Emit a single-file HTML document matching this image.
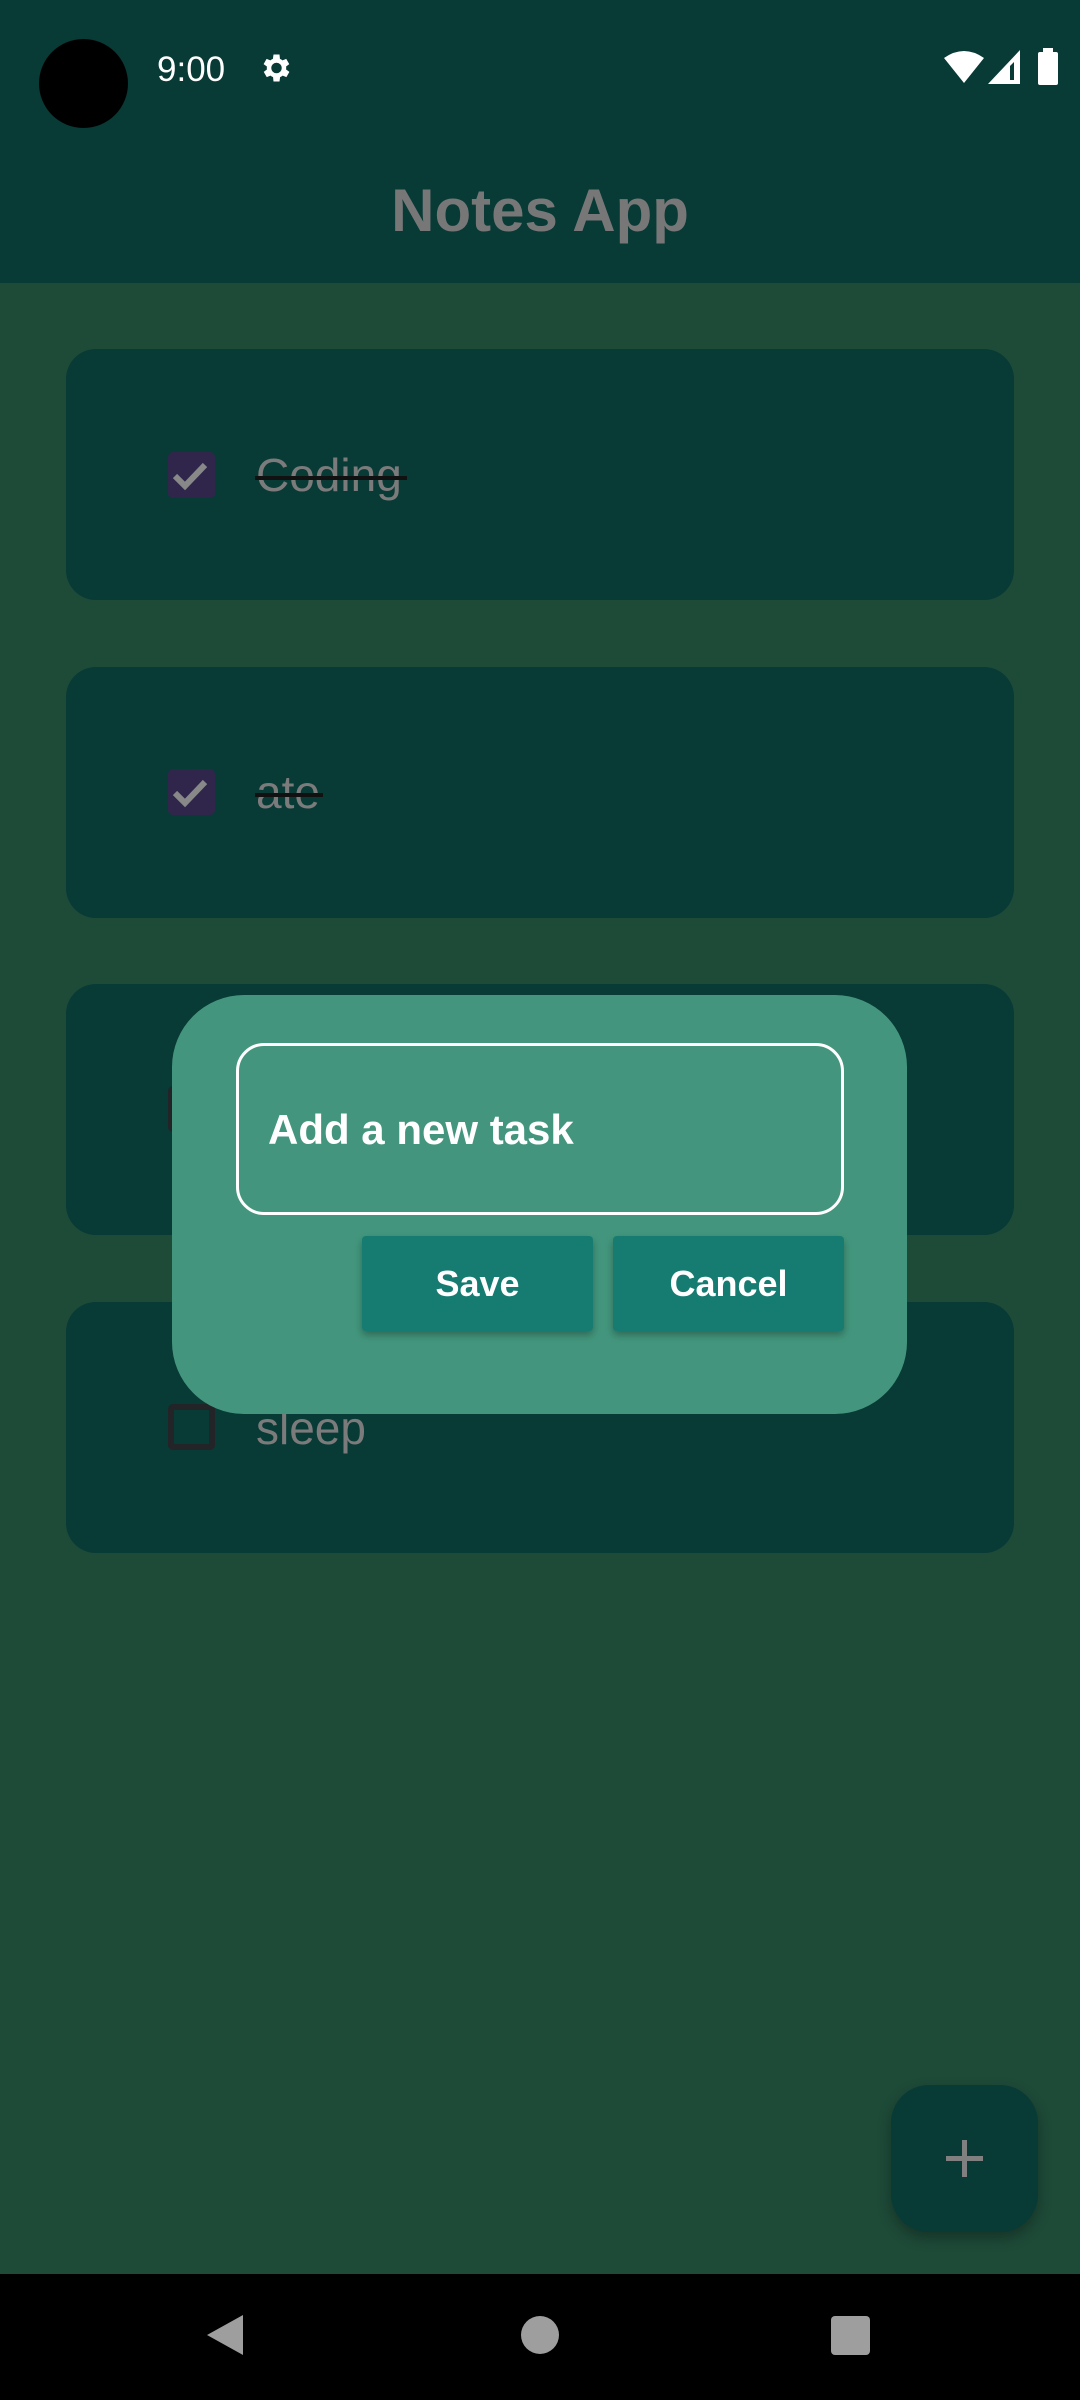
<!DOCTYPE html>
<html><head><meta charset="utf-8"><style>
*{margin:0;padding:0;box-sizing:border-box}
body{width:1080px;height:2400px;background:#1e4a38;position:relative;overflow:hidden;font-family:"Liberation Sans",sans-serif}
.abs{position:absolute}
.card{position:absolute;left:66px;width:948px;height:251px;background:#083a36;border-radius:30px}
.cb{position:absolute;left:168px;width:47px;height:46px;border-radius:5px}
.on{background:#30264c}
.off{border:6px solid #222428}
.txt{position:absolute;left:256px;font-size:46px;color:#7b7b7b;line-height:1}
.line{position:absolute;height:4px;background:#111}
.btn{position:absolute;top:1236px;height:95px;width:231px;background:#167c71;border-radius:4px;color:#fff;font-size:36px;font-weight:bold;text-align:center;line-height:95px;box-shadow:0 4px 8px rgba(0,0,0,.3)}
</style></head><body>
<div class="abs" style="left:0;top:0;width:1080px;height:283px;background:#083a36"></div>
<div class="abs" style="left:39px;top:39px;width:89px;height:89px;border-radius:50%;background:#000"></div>
<div class="abs" style="left:157px;top:50px;font-size:35px;color:#fff">9:00</div>
<svg class="abs" style="left:257px;top:50px" width="36" height="36" viewBox="0 0 24 24"><path fill="#fff" d="M19.4 13a7.5 7.5 0 0 0 0-2l2.1-1.6-2-3.5-2.5 1a7 7 0 0 0-1.7-1L15 3h-4l-.4 2.9a7 7 0 0 0-1.7 1l-2.5-1-2 3.5L6.6 11a7.5 7.5 0 0 0 0 2l-2.1 1.6 2 3.5 2.5-1a7 7 0 0 0 1.7 1L11 21h4l.4-2.9a7 7 0 0 0 1.7-1l2.5 1 2-3.5zM13 15.5a3.5 3.5 0 1 1 0-7 3.5 3.5 0 0 1 0 7z"/></svg>
<svg class="abs" style="left:944px;top:50px" width="40" height="34" viewBox="0 0 40 34"><path fill="#fff" d="M0 8Q20-6 40 8L20 33z"/></svg>
<svg class="abs" style="left:988px;top:50px" width="32" height="34" viewBox="0 0 32 34"><path fill="#fff" d="M32 0V34H0z"/><path fill="#083a36" d="M26 12V30H22V16z"/></svg>
<div class="abs" style="left:1038px;top:52px;width:20px;height:33px;background:#fff;border-radius:2px"></div>
<div class="abs" style="left:1043px;top:48px;width:10px;height:5px;background:#fff"></div>
<div class="abs" style="left:0;top:176px;width:1080px;text-align:center;font-size:60px;font-weight:bold;color:#777">Notes App</div>

<div class="card" style="top:349px"></div>
<div class="card" style="top:667px"></div>
<div class="card" style="top:984px"></div>
<div class="card" style="top:1302px"></div>

<div class="cb on" style="top:452px"><svg width="47" height="46" viewBox="0 0 47 46"><path d="M7 24l10 10 20-21" stroke="#888" stroke-width="6" fill="none"/></svg></div>
<div class="txt" style="top:452px">Coding</div>
<div class="line" style="left:255px;top:476px;width:152px"></div>
<div class="cb on" style="top:769px"><svg width="47" height="46" viewBox="0 0 47 46"><path d="M7 24l10 10 20-21" stroke="#888" stroke-width="6" fill="none"/></svg></div>
<div class="txt" style="top:769px">ate</div>
<div class="line" style="left:255px;top:793px;width:68px"></div>
<div class="cb off" style="top:1086px"></div>
<div class="cb off" style="top:1404px"></div>
<div class="txt" style="top:1405px">sleep</div>

<div class="abs" style="left:172px;top:995px;width:735px;height:419px;background:#43967d;border-radius:72px"></div>
<div class="abs" style="left:236px;top:1043px;width:608px;height:172px;border:3px solid #fff;border-radius:28px"></div>
<div class="abs" style="left:268px;top:1106px;font-size:42px;font-weight:bold;color:#fff">Add a new task</div>
<div class="btn" style="left:362px">Save</div>
<div class="btn" style="left:613px">Cancel</div>

<div class="abs" style="left:891px;top:2085px;width:147px;height:147px;background:#083a36;border-radius:38px;box-shadow:0 6px 14px rgba(0,0,0,.3)"></div>
<div class="abs" style="left:946px;top:2156px;width:37px;height:5px;background:#808080"></div>
<div class="abs" style="left:962px;top:2140px;width:5px;height:37px;background:#808080"></div>

<div class="abs" style="left:0;top:2274px;width:1080px;height:126px;background:#000"></div>
<svg class="abs" style="left:205px;top:2313px" width="40" height="44" viewBox="0 0 40 44"><path fill="#9e9e9e" d="M38 2V42L2 22z"/></svg>
<div class="abs" style="left:521px;top:2316px;width:38px;height:38px;border-radius:50%;background:#9e9e9e"></div>
<div class="abs" style="left:831px;top:2316px;width:39px;height:39px;border-radius:4px;background:#9e9e9e"></div>
</body></html>
